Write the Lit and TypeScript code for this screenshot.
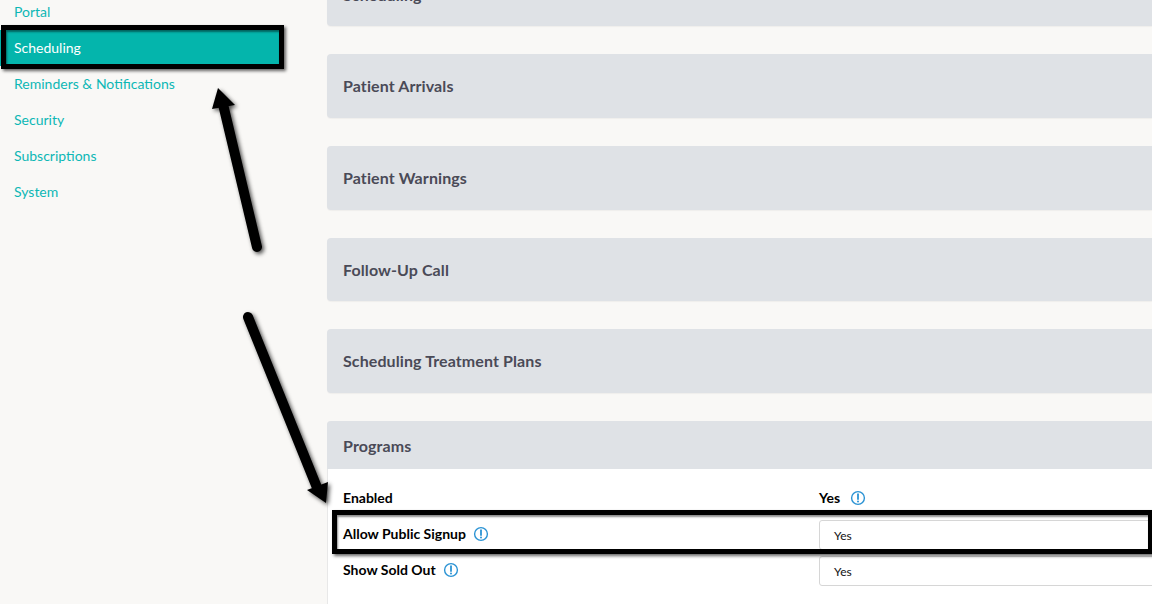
import { LitElement, html, css, svg } from "lit";
import { customElement } from "lit/decorators.js";

const info = html`<svg class="info" width="16" height="16" viewBox="0 0 16 16" fill="none">
  <circle cx="8" cy="8" r="6.4" stroke="#2b93d4" stroke-width="1.4"></circle>
  <path d="M8 4.2V9" stroke="#2b93d4" stroke-width="1.8" stroke-linecap="round"></path>
  <circle cx="8" cy="11.4" r="1" fill="#2b93d4"></circle>
</svg>`;

@customElement("app-root")
export class AppRoot extends LitElement {
  static styles = css`
    :host {
      display: block;
      position: relative;
      width: 1152px;
      height: 604px;
      overflow: hidden;
      background: #f9f8f6;
      font-family: Lato, "Liberation Sans", sans-serif;
    }
    .page {
      display: flex;
      height: 604px;
    }
    .side {
      width: 327px;
      flex: none;
      margin-top: -6px;
      display: flex;
      flex-direction: column;
    }
    .nav {
      height: 36px;
      line-height: 36px;
      padding-left: 14px;
      font-size: 14px;
      color: #0db7b5;
    }
    .nav.active {
      width: 266px;
      background: #04b5ac;
      color: #fff;
    }
    .main {
      flex: 1;
      min-width: 0;
      margin-top: -37.8px;
      display: flex;
      flex-direction: column;
      gap: 28px;
    }
    .panel {
      height: 63.8px;
      box-sizing: border-box;
      padding-bottom: 0.8px;
      flex: none;
      display: flex;
      align-items: center;
      padding-left: 16px;
      background: #dfe2e6;
      border-radius: 4px 0 0 4px;
      box-shadow: 0 1px 1px rgba(0, 0, 0, 0.04);
      font-size: 16px;
      font-weight: 700;
      letter-spacing: 0.1px;
      color: #4a4a57;
    }
    .panel:first-child {
      padding-bottom: 0;
    }
    .programs {
      flex: none;
      display: flex;
      flex-direction: column;
      height: 220px;
      background: #fff;
      border-left: 1px solid #e8e8e8;
      border-radius: 4px 0 0 0;
    }
    .programs-head {
      height: 48px;
      flex: none;
      margin-left: -1px;
      display: flex;
      align-items: center;
      padding-left: 16px;
      background: #dfe2e6;
      border-radius: 4px 0 0 0;
      font-size: 16px;
      font-weight: 700;
      letter-spacing: 0.1px;
      color: #4a4a57;
    }
    .rows {
      display: flex;
      flex-direction: column;
      padding-top: 10px;
    }
    .row {
      height: 36px;
      display: grid;
      grid-template-columns: 476px 1fr;
      align-items: center;
      padding-left: 15px;
      font-size: 14px;
      font-weight: 700;
      color: #000;
    }
    .label,
    .value {
      display: flex;
      align-items: center;
      gap: 7px;
    }
    .value {
      gap: 10px;
    }
    .select {
      height: 30px;
      box-sizing: border-box;
      margin-right: -8px;
      margin-top: 4px;
      display: flex;
      align-items: center;
      padding-left: 14px;
      background: #fff;
      border: 1px solid #d6d6d6;
      border-radius: 3px;
      font-size: 12px;
      font-weight: 400;
      color: #111;
    }
    .info {
      display: block;
      flex: none;
      margin-top: 2px;
    }
    .box {
      position: absolute;
      box-sizing: border-box;
      border: 5px solid #000;
      box-shadow: 2px 2px 3px rgba(0, 0, 0, 0.6),
        inset 1px 2px 2px rgba(0, 0, 0, 0.45);
    }
    .box-nav {
      left: 1px;
      top: 25px;
      width: 283px;
      height: 44px;
    }
    .box-row {
      left: 332px;
      top: 510px;
      width: 830px;
      height: 44px;
      border-right-width: 14px;
    }
    .arrows {
      position: absolute;
      left: 0;
      top: 0;
      pointer-events: none;
      filter: drop-shadow(2px 2px 2px rgba(0, 0, 0, 0.7));
    }
  `;

  render() {
    const nav = ["Portal", "Scheduling", "Reminders & Notifications", "Security", "Subscriptions", "System"];
    const panels = ["Scheduling", "Patient Arrivals", "Patient Warnings", "Follow-Up Call", "Scheduling Treatment Plans"];
    return html`
      <div class="page">
        <aside class="side">
          ${nav.map((n) => html`<div class="nav ${n === "Scheduling" ? "active" : ""}">${n}</div>`)}
        </aside>
        <main class="main">
          ${panels.map((p) => html`<div class="panel">${p}</div>`)}
          <section class="programs">
            <div class="programs-head">Programs</div>
            <div class="rows">
              <div class="row">
                <div class="label">Enabled</div>
                <div class="value">Yes ${info}</div>
              </div>
              <div class="row">
                <div class="label">Allow Public Signup ${info}</div>
                <div class="select">Yes</div>
              </div>
              <div class="row">
                <div class="label">Show Sold Out ${info}</div>
                <div class="select">Yes</div>
              </div>
            </div>
          </section>
        </main>
      </div>
      <div class="box box-nav"></div>
      <div class="box box-row"></div>
      <svg class="arrows" width="1152" height="604" viewBox="0 0 1152 604">
        ${svg`<path d="M257 247L222 100" stroke="#000" stroke-width="10" stroke-linecap="round" fill="none"/>
        <path d="M218 88L235 105L212 109Z" fill="#000"/>
        <path d="M248 317L318 490" stroke="#000" stroke-width="10" stroke-linecap="round" fill="none"/>
        <path d="M326 503L307 490L328 482Z" fill="#000"/>`}
      </svg>
    `;
  }
}
